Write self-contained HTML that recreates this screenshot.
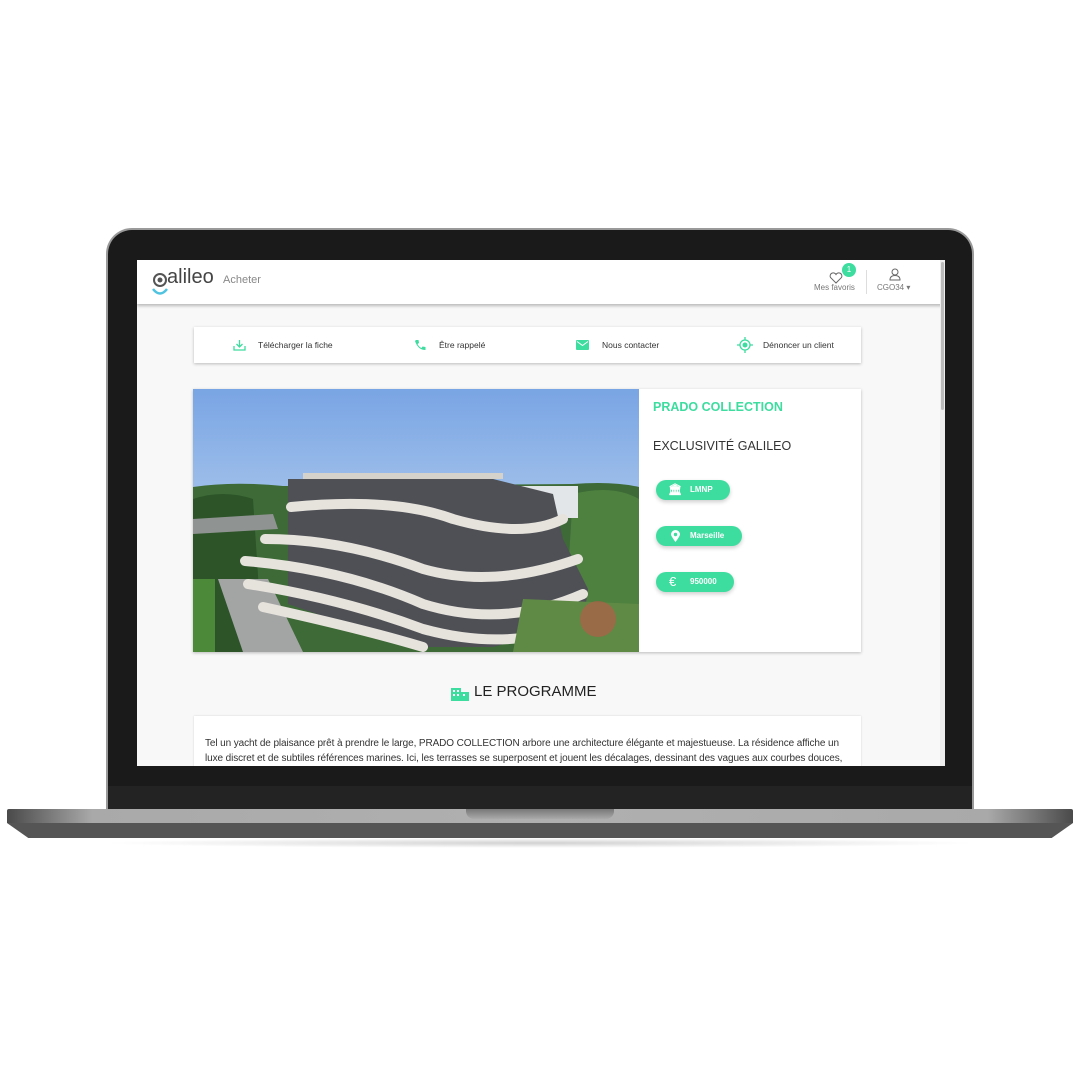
<!DOCTYPE html>
<html><head><meta charset="utf-8">
<style>
*{margin:0;padding:0;box-sizing:border-box}
body{width:1080px;height:1080px;background:#fff;position:relative;overflow:hidden;font-family:"Liberation Sans",sans-serif}
.abs{position:absolute}
#lid{left:106px;top:228px;width:868px;height:582px;border-radius:26px 26px 0 0;background:#1a1a1a;border:2px solid #9a9a9a;border-bottom:none}
#screen{left:137px;top:260px;width:808px;height:506px;background:#f8f8f8;overflow:hidden}
#chin{left:108px;top:786px;width:864px;height:23px;background:#232323}
#base{left:7px;top:809px;width:1066px;height:14px;background:linear-gradient(90deg,#4a4a4a 0,#a9a9a9 8%,#b0b0b0 50%,#a9a9a9 92%,#4a4a4a 100%);border-radius:2px 2px 0 0}
#base2{left:7px;top:823px;width:1066px;height:15px;background:#555;clip-path:polygon(0 0,100% 0,98% 100%,2% 100%)}
#shadow{left:100px;top:838px;width:880px;height:10px;background:radial-gradient(ellipse at center,rgba(0,0,0,.18),rgba(0,0,0,0) 70%)}
#notch{left:466px;top:809px;width:148px;height:10px;background:linear-gradient(#777,#aaa);border-radius:0 0 8px 8px}
.hdr{left:0;top:0;width:808px;height:44px;background:#fff;box-shadow:0 2px 3px rgba(0,0,0,.25)}
.bar{left:57px;top:67px;width:667px;height:36px;background:#fff;box-shadow:0 1px 3px rgba(0,0,0,.25);font-size:8.5px;color:#333}
.bar span{position:absolute;top:13px}
.card{left:56px;top:129px;width:668px;height:263px;background:#fff;box-shadow:0 1px 3px rgba(0,0,0,.25)}
.pill{position:absolute;left:15px;height:20px;border-radius:10px;background:#3ddc9f;box-shadow:0 2px 4px rgba(0,0,0,.2);color:#fff;font-weight:bold;font-size:8px;line-height:20px}
.txt{left:57px;top:456px;width:667px;height:60px;background:#fff;box-shadow:0 0 2px rgba(0,0,0,.15);font-size:10px;color:#333;line-height:15px;padding:20px 10px 0 11px;letter-spacing:-.1px}
</style></head><body>
<div class="abs" id="lid"></div>
<div class="abs" id="chin"></div>
<div class="abs" id="shadow"></div>
<div class="abs" id="base2"></div>
<div class="abs" id="base"></div>
<div class="abs" id="notch"></div>
<div class="abs" id="screen">
  <div class="abs hdr">
    <svg class="abs" style="left:14px;top:10px" width="18" height="28" viewBox="0 0 18 28"><circle cx="9" cy="10" r="6" fill="none" stroke="#555" stroke-width="2"/><circle cx="9" cy="10" r="2.5" fill="#555"/><path d="M2 19 Q9 28 16 19" fill="none" stroke="#4fc3e0" stroke-width="2.5"/></svg>
    <div class="abs" style="left:30px;top:6px;font-size:20px;color:#444">alileo</div>
    <div class="abs" style="left:86px;top:14px;font-size:11px;color:#888">Acheter</div>
    <svg class="abs" style="left:692px;top:12px" width="14" height="12" viewBox="0 0 14 12"><path d="M7 11 L1.5 5.5 A3 3 0 0 1 7 2.5 A3 3 0 0 1 12.5 5.5 Z" fill="none" stroke="#666" stroke-width="1"/></svg>
    <div class="abs" style="left:705px;top:3px;width:14px;height:14px;border-radius:7px;background:#3ddc9f;color:#fff;font-size:8px;text-align:center;line-height:14px">1</div>
    <div class="abs" style="left:677px;top:23px;font-size:8px;color:#777">Mes favoris</div>
    <div class="abs" style="left:729px;top:10px;width:1px;height:24px;background:#ddd"></div>
    <svg class="abs" style="left:752px;top:8px" width="12" height="13" viewBox="0 0 12 13"><circle cx="6" cy="4" r="3" fill="none" stroke="#666"/><path d="M1 12 Q1 7.5 6 7.5 Q11 7.5 11 12 Z" fill="none" stroke="#666"/></svg>
    <div class="abs" style="left:740px;top:23px;font-size:8px;color:#777">CGO34 ▾</div>
  </div>
  <div class="abs" style="right:0;top:0;width:5px;height:506px;background:#eee"></div>
  <div class="abs" style="right:1px;top:2px;width:3px;height:148px;background:#bbb;border-radius:2px"></div>
  <div class="abs bar">
    <svg class="abs" style="left:39px;top:12px" width="13" height="12" viewBox="0 0 13 12"><path d="M6.5 1v7M3.5 5l3 3 3-3M1 7v4h11V7" fill="none" stroke="#3ddc9f" stroke-width="1.3"/></svg>
    <span style="left:64px">Télécharger la fiche</span>
    <svg class="abs" style="left:220px;top:12px" width="12" height="12" viewBox="0 0 12 12"><path d="M2 1 L4.5 1 L5 4 L3.5 5 Q5 8 7.5 9 L8.5 7.5 L11.5 8 L11.5 11 Q4 11 1 2 Z" fill="#3ddc9f"/></svg>
    <span style="left:245px">Être rappelé</span>
    <svg class="abs" style="left:382px;top:13px" width="13" height="10" viewBox="0 0 13 10"><rect width="13" height="10" rx="1" fill="#3ddc9f"/><path d="M1 1.5l5.5 4 5.5-4" fill="none" stroke="#fff" stroke-width="1"/></svg>
    <span style="left:408px">Nous contacter</span>
    <svg class="abs" style="left:543px;top:10px" width="16" height="16" viewBox="0 0 16 16"><circle cx="8" cy="8" r="5" fill="none" stroke="#3ddc9f" stroke-width="1.3"/><circle cx="8" cy="8" r="2.5" fill="#3ddc9f"/><path d="M8 0v3M8 13v3M0 8h3M13 8h3" stroke="#3ddc9f" stroke-width="1.3"/></svg>
    <span style="left:569px">Dénoncer un client</span>
  </div>
  <div class="abs card">
    <svg class="abs" style="left:0;top:0" width="446" height="263" viewBox="0 0 446 263">
      <defs><linearGradient id="sky" x1="0" y1="0" x2="0" y2="1"><stop offset="0" stop-color="#79a5e4"/><stop offset="1" stop-color="#d6e5f3"/></linearGradient></defs>
      <rect width="446" height="263" fill="url(#sky)"/>
      <path d="M0 98 Q40 92 90 97 L380 95 Q420 92 446 98 L446 263 L0 263 Z" fill="#3d6a36"/>
      <path d="M0 110 Q30 100 60 110 L70 263 L0 263 Z" fill="#2c5428"/>
      <path d="M380 105 Q420 95 446 110 L446 263 L370 263 Z" fill="#4e8040"/>
      <rect x="300" y="97" width="85" height="32" fill="#e3e6e8"/>
      <path d="M0 130 L80 125 L85 140 L0 145 Z" fill="#8f9391"/>
      <path d="M25 190 L75 190 L110 263 L50 263 Z" fill="#a3a5a5"/>
      <path d="M95 90 L300 90 L360 105 L370 150 L395 200 L390 235 L300 258 L220 258 L95 215 Z" fill="#4e5056"/>
      <g fill="none" stroke="#e6e2dc" stroke-width="10" stroke-linecap="round">
        <path d="M98 118 Q200 108 260 130 Q330 150 370 130"/>
        <path d="M72 150 Q150 150 230 180 Q300 200 385 170"/>
        <path d="M52 172 Q150 180 230 215 Q310 240 390 205"/>
        <path d="M55 195 Q150 210 230 240 Q320 265 400 230"/>
        <path d="M70 218 Q170 240 230 258"/>
      </g>
      <rect x="110" y="84" width="200" height="6" fill="#d5d2cc"/>
      <path d="M330 210 L446 215 L446 263 L320 263 Z" fill="#5f8a45"/>
      <circle cx="405" cy="230" r="18" fill="#c0564a" opacity=".6"/>
      <rect x="0" y="190" width="22" height="73" fill="#4c8a3a"/>
    </svg>
    <div class="abs" style="left:460px;top:11px;font-size:12.5px;font-weight:bold;color:#3ddc9f">PRADO COLLECTION</div>
    <div class="abs" style="left:460px;top:50px;font-size:12.5px;color:#333">EXCLUSIVITÉ GALILEO</div>
    <div class="abs" style="left:448px;top:0;width:220px;height:263px">
      <div class="pill" style="top:91px;width:74px;padding-left:34px">LMNP<span style="position:absolute;left:12px;top:0;font-size:11px">🏛</span></div>
      <div class="pill" style="top:137px;width:86px;padding-left:34px">Marseille<svg style="position:absolute;left:15px;top:4px" width="9" height="12" viewBox="0 0 9 12"><path d="M4.5 12 Q0 6 0 4.5 A4.5 4.5 0 0 1 9 4.5 Q9 6 4.5 12Z" fill="#fff"/><circle cx="4.5" cy="4.5" r="1.7" fill="#3ddc9f"/></svg></div>
      <div class="pill" style="top:183px;width:78px;padding-left:34px">950000<span style="position:absolute;left:13px;top:0;font-size:13px;font-weight:normal">€</span></div>
    </div>
  </div>
  <svg class="abs" style="left:314px;top:425px" width="18" height="16" viewBox="0 0 18 16"><rect x="0" y="3" width="10" height="13" fill="#3ddc9f"/><rect x="10" y="7" width="8" height="9" fill="#3ddc9f"/><g fill="#fff"><rect x="2" y="5" width="2" height="2"/><rect x="6" y="5" width="2" height="2"/><rect x="2" y="9" width="2" height="2"/><rect x="6" y="9" width="2" height="2"/><rect x="12" y="9" width="2" height="2"/></g></svg>
  <div class="abs" style="left:337px;top:423px;font-size:15px;color:#222">LE PROGRAMME</div>
  <div class="abs txt">Tel un yacht de plaisance prêt à prendre le large, PRADO COLLECTION arbore une architecture élégante et majestueuse. La résidence affiche un luxe discret et de subtiles références marines. Ici, les terrasses se superposent et jouent les décalages, dessinant des vagues aux courbes douces,</div>
</div>
</body></html>
